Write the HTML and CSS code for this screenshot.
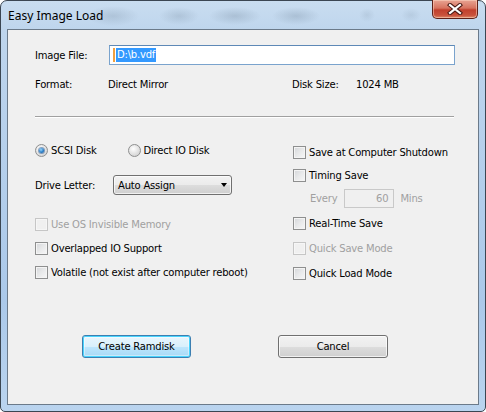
FILE: index.html
```html
<!DOCTYPE html>
<html>
<head>
    <title>Easy Image Load</title>
    <link rel="stylesheet" href="styles.css">
</head>
<body>
    <div class="window">
        <div class="titlebar">
            <span class="title">Easy Image Load</span>
            <div class="close">
                <svg width="16" height="12" viewBox="0 0 16 12">
                    <path d="M3 2 L13 10 M13 2 L3 10" stroke="#4a1a14" stroke-width="4.2" stroke-linecap="square"/>
                    <path d="M3 2 L13 10 M13 2 L3 10" stroke="#fff" stroke-width="2.2" stroke-linecap="square"/>
                </svg>
            </div>
        </div>
        <div class="client">
            <div class="row file-row">
                <span class="label file-label">Image File:</span>
                <div class="textbox"><span class="caret"></span><span class="selected">D:\b.vdf</span></div>
            </div>
            <div class="row info-row">
                <span class="label format-label">Format:</span>
                <span class="value format-value">Direct Mirror</span>
                <span class="label size-label">Disk Size:</span>
                <span class="value">1024 MB</span>
            </div>
            <div class="separator"></div>

            <div class="options">
                <div class="column left">
                    <div class="opt radio-row">
                        <span class="radio checked"></span><span class="text">SCSI Disk</span>
                        <span class="radio second"></span><span class="text">Direct IO Disk</span>
                    </div>
                    <div class="opt drive-row">
                        <span class="label drive-label">Drive Letter:</span>
                        <div class="combo"><span>Auto Assign</span><span class="arrow"></span></div>
                    </div>
                    <div class="opt disabled first-check">
                        <span class="check"></span><span class="text">Use OS Invisible Memory</span>
                    </div>
                    <div class="opt">
                        <span class="check"></span><span class="text">Overlapped IO Support</span>
                    </div>
                    <div class="opt">
                        <span class="check"></span><span class="text">Volatile (not exist after computer reboot)</span>
                    </div>
                </div>
                <div class="column right">
                    <div class="opt shutdown-row">
                        <span class="check"></span><span class="text">Save at Computer Shutdown</span>
                    </div>
                    <div class="opt tight">
                        <span class="check"></span><span class="text">Timing Save</span>
                    </div>
                    <div class="opt every-row disabled">
                        <span class="every-label">Every</span>
                        <div class="minutes">60</div>
                        <span class="mins">Mins</span>
                    </div>
                    <div class="opt realtime-row">
                        <span class="check"></span><span class="text">Real-Time Save</span>
                    </div>
                    <div class="opt disabled wide">
                        <span class="check"></span><span class="text">Quick Save Mode</span>
                    </div>
                    <div class="opt wide">
                        <span class="check"></span><span class="text">Quick Load Mode</span>
                    </div>
                </div>
            </div>

            <div class="buttons">
                <div class="button default">Create Ramdisk</div>
                <div class="button cancel">Cancel</div>
            </div>
        </div>
    </div>
</body>
</html>
```

FILE: styles.css
```css
body {
    margin: 0;
    background-color: #ffffff;
}
.window {
    width: 486px;
    height: 412px;
    box-sizing: border-box;
    border: 1px solid #3b4652;
    border-radius: 7px 7px 5px 5px;
    padding: 0 6px 6px 6px;
    display: flex;
    flex-direction: column;
    background:
        radial-gradient(ellipse 26px 10px at 112px 15px, rgba(100,120,140,0.22), transparent),
        radial-gradient(ellipse 20px 9px at 178px 15px, rgba(100,120,140,0.22), transparent),
        radial-gradient(ellipse 26px 9px at 234px 15px, rgba(100,120,140,0.26), transparent),
        radial-gradient(ellipse 24px 9px at 295px 15px, rgba(100,120,140,0.26), transparent),
        radial-gradient(ellipse 8px 7px at 366px 14px, rgba(100,120,140,0.14), transparent),
        radial-gradient(ellipse 10px 7px at 410px 14px, rgba(100,120,140,0.14), transparent),
        linear-gradient(to bottom, #c9ddf0 0%, #bed5ed 30px, #abc9ea 300px, #bad4ef 100%);
}
.titlebar {
    height: 28px;
    display: flex;
    align-items: flex-start;
}
.title {
    font-family: "Noto Sans", "Open Sans", sans-serif;
    font-size: 12px;
    color: #000;
    padding: 6px 0 0 1px;
}
.close {
    margin-left: auto;
    margin-top: -1px;
    margin-right: 1px;
    width: 46px;
    height: 19px;
    box-sizing: border-box;
    border: 1px solid #5e2119;
    border-top: none;
    border-radius: 0 0 5px 5px;
    background: linear-gradient(to bottom, #e8a493 0%, #d7735f 45%, #c1402d 55%, #c9523c 85%, #dd8a6a 100%);
    box-shadow: inset 0 0 0 1px rgba(255,220,200,0.5);
    display: flex;
    align-items: center;
    justify-content: center;
}
.client {
    flex: 1;
    border: 1px solid #6b7a8a;
    background-color: #f0f0f0;
    padding-left: 27px;
    font-family: "DejaVu Sans", Verdana, sans-serif;
    font-size: 10px;
    letter-spacing: -0.2px;
    color: #000;
}
.row {
    display: flex;
    align-items: center;
    height: 20px;
}
.file-row {
    margin-top: 15px;
}
.file-label {
    width: 74px;
}
.textbox {
    width: 346px;
    height: 20px;
    box-sizing: border-box;
    border: 1px solid #7aa3cd;
    border-top-color: #5d88b6;
    background: #fff;
    display: flex;
    align-items: center;
    padding-left: 3px;
}
.caret {
    width: 2px;
    height: 14px;
    background: #f0a040;
    margin-right: 1px;
}
.selected {
    background: #3399ff;
    color: #fff;
    line-height: 14px;
    padding: 0 1px;
}
.info-row {
    margin-top: 9px;
}
.format-label {
    width: 73px;
}
.format-value {
    width: 184px;
}
.size-label {
    width: 64px;
}
.separator {
    width: 419px;
    margin-top: 22px;
    border-top: 1px solid #a0a0a0;
    border-bottom: 1px solid #ffffff;
}
.options {
    display: flex;
    margin-top: 22px;
}
.column.left {
    width: 258px;
}
.opt {
    display: flex;
    align-items: center;
    height: 20px;
    margin-top: 4px;
}
.disabled {
    color: #a0a0a0;
}
.radio-row {
    margin-top: 0;
}
.radio {
    width: 13px;
    height: 13px;
    box-sizing: border-box;
    border-radius: 50%;
    border: 1px solid #8e8f8f;
    background: radial-gradient(circle at 40% 35%, #ffffff 0%, #e6e6e6 45%, #c8c8c8 100%);
    margin-right: 3px;
    display: flex;
    align-items: center;
    justify-content: center;
}
.radio.checked::after {
    content: "";
    width: 5px;
    height: 5px;
    border-radius: 50%;
    background: radial-gradient(circle at 40% 35%, #9bd6f9 0%, #2a7fc9 55%, #124f91 100%);
    box-shadow: 0 0 0 1px rgba(30,80,140,0.5);
}
.radio.second {
    margin-left: 31px;
}
.drive-row {
    margin-top: 15px;
}
.drive-label {
    width: 78px;
}
.combo {
    width: 119px;
    height: 20px;
    box-sizing: border-box;
    border: 1px solid #707070;
    border-radius: 3px;
    background: linear-gradient(to bottom, #f2f2f2 0%, #ebebeb 50%, #dddddd 51%, #cfcfcf 100%);
    box-shadow: inset 0 0 0 1px rgba(255,255,255,0.7);
    display: flex;
    align-items: center;
    padding-left: 4px;
    padding-right: 4px;
}
.arrow {
    margin-left: auto;
    width: 0;
    height: 0;
    border-left: 3.5px solid transparent;
    border-right: 3.5px solid transparent;
    border-top: 4px solid #000;
}
.first-check {
    margin-top: 19px;
}
.check {
    width: 13px;
    height: 13px;
    box-sizing: border-box;
    border: 1px solid #8e8f8f;
    background: linear-gradient(135deg, #d4d6d9 0%, #e8e9ea 50%, #f7f7f7 100%);
    box-shadow: inset 0 0 0 1px #f4f4f4;
    margin-right: 3px;
    flex-shrink: 0;
}
.disabled .check {
    border-color: #c6c6c6;
    background: #f0f0f0;
    box-shadow: inset 0 0 0 1px #f6f6f6;
}
.shutdown-row {
    margin-top: 2px;
}
.tight {
    margin-top: 3px;
}
.every-row {
    margin-top: 3px;
    padding-left: 17px;
}
.minutes {
    width: 50px;
    height: 19px;
    box-sizing: border-box;
    border: 1px solid #c9c9c9;
    background: #f0f0f0;
    margin-left: 7px;
    text-align: right;
    line-height: 17px;
    padding-right: 5px;
}
.mins {
    margin-left: 6px;
}
.realtime-row {
    margin-top: 5px;
}
.wide {
    margin-top: 5px;
}
.buttons {
    display: flex;
    margin-top: 52px;
    padding-left: 47px;
}
.button {
    width: 110px;
    height: 23px;
    box-sizing: border-box;
    border: 1px solid #707070;
    border-radius: 3px;
    background: linear-gradient(to bottom, #f2f2f2 0%, #ebebeb 50%, #dddddd 51%, #cfcfcf 100%);
    box-shadow: inset 0 0 0 1px rgba(255,255,255,0.7);
    display: flex;
    align-items: center;
    justify-content: center;
}
.button.default {
    width: 109px;
    border-color: #3c7fb1;
    background: linear-gradient(to bottom, #eaf6fd 0%, #d9f0fc 50%, #bee6fd 51%, #a7d9f5 100%);
    box-shadow: inset 0 0 0 1px #48d4fd, inset 0 0 0 2px rgba(255,255,255,0.4);
}
.button.cancel {
    margin-left: 87px;
}
```
